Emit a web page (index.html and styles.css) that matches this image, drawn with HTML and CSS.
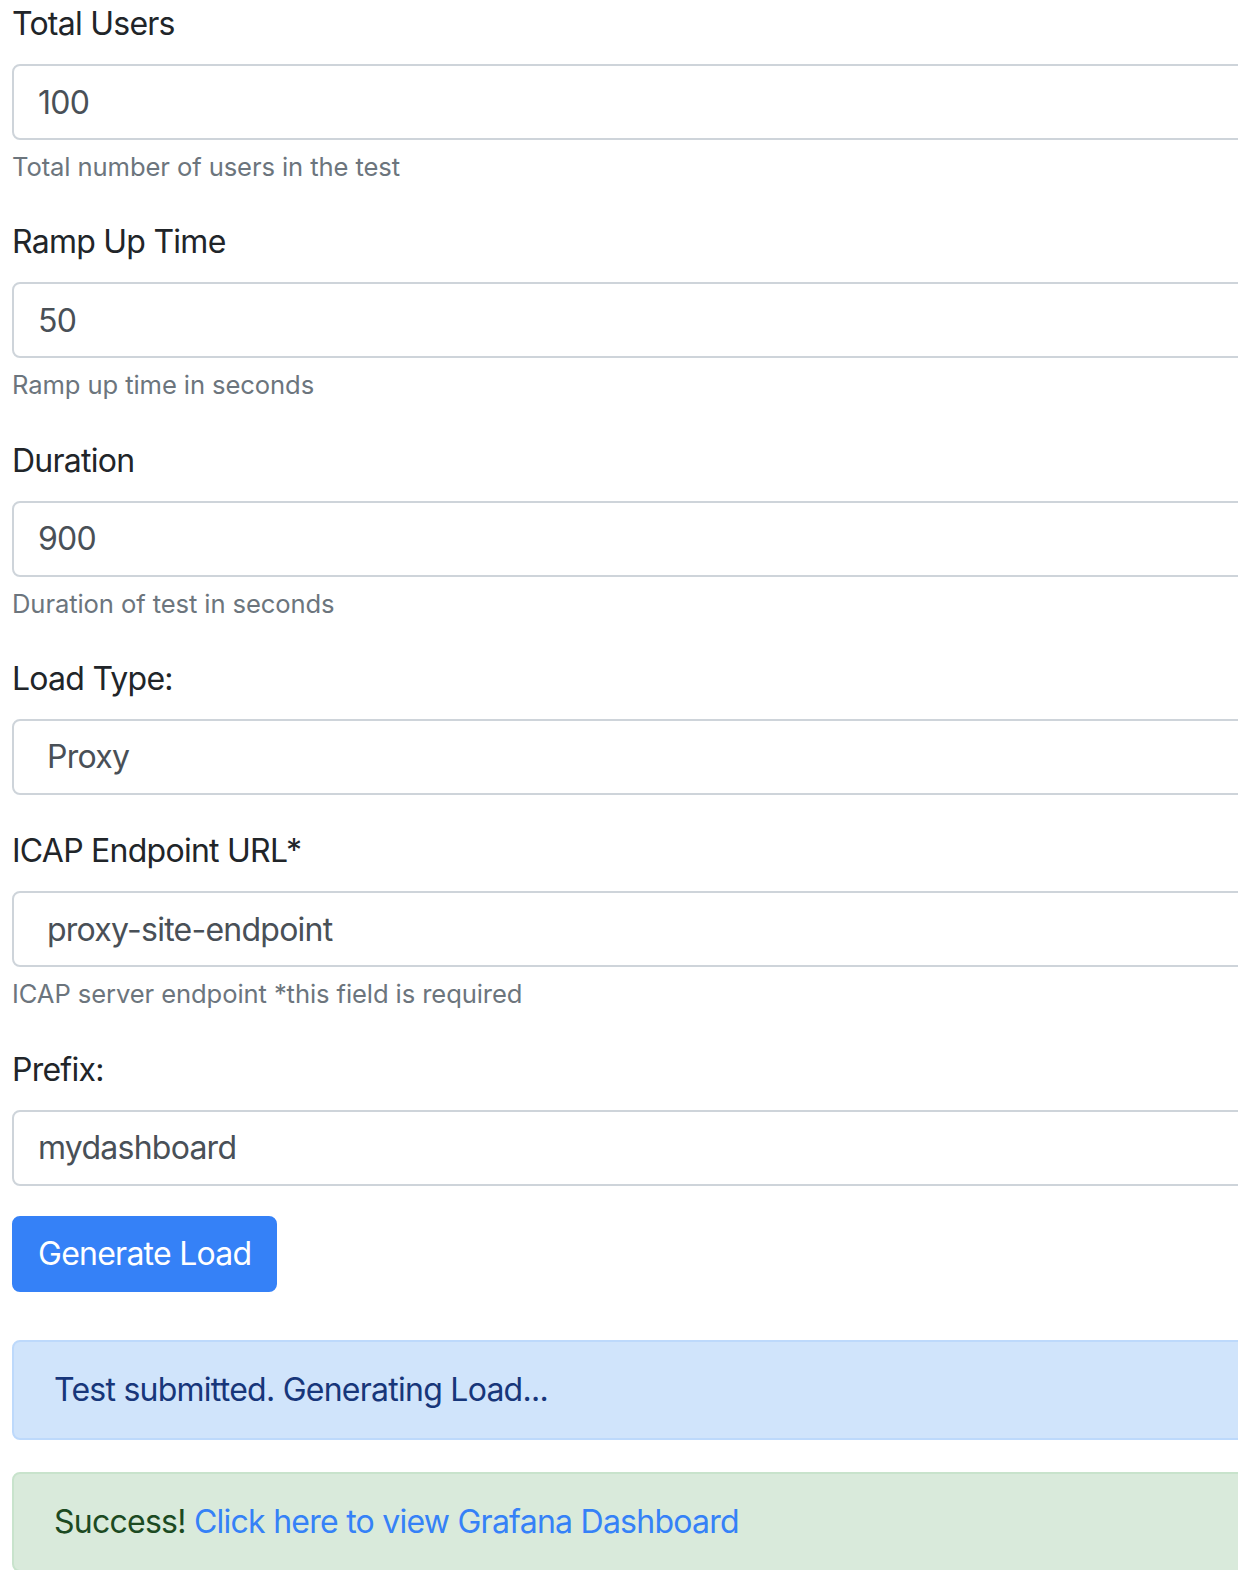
FILE: index.html
```html
<!DOCTYPE html>
<html>
<head>
<meta charset="utf-8">
<link rel="stylesheet" href="styles.css">
</head>
<body>
<div class="page">
  <form class="form">
    <div class="group">
      <label class="label">Total Users</label>
      <input class="control" value="100">
      <small class="help">Total number of users in the test</small>
    </div>
    <div class="group">
      <label class="label">Ramp Up Time</label>
      <input class="control" value="50">
      <small class="help">Ramp up time in seconds</small>
    </div>
    <div class="group">
      <label class="label">Duration</label>
      <input class="control" value="900">
      <small class="help">Duration of test in seconds</small>
    </div>
    <div class="group">
      <label class="label">Load Type:</label>
      <div class="control control-select">Proxy</div>
    </div>
    <div class="group">
      <label class="label">ICAP Endpoint URL*</label>
      <input class="control control-wide" value="proxy-site-endpoint">
      <small class="help">ICAP server endpoint *this field is required</small>
    </div>
    <div class="group">
      <label class="label">Prefix:</label>
      <input class="control" value="mydashboard">
    </div>
    <button type="button" class="btn">Generate Load</button>
  </form>
  <div class="alert alert-info">Test submitted. Generating Load...</div>
  <div class="alert alert-success">Success! <a class="link" href="#">Click here to view Grafana Dashboard</a></div>
</div>
</body>
</html>
```

FILE: styles.css
```css
html, body {
  margin: 0;
  padding: 0;
  overflow: hidden;
  background: #fff;
}
body {
  font-family: Inter, "Noto Sans", "Liberation Sans", sans-serif;
  font-size: 32px;
  line-height: 48px;
  color: #212529;
  letter-spacing: -0.75px;
}
.page {
  width: 1300px;
  padding-left: 12px;
}
.form {
  display: flex;
  flex-direction: column;
}
.group {
  display: flex;
  flex-direction: column;
  margin-bottom: 32px;
}
.label {
  display: block;
  margin-bottom: 16px;
  font-size: 32px;
  line-height: 48px;
  color: #212529;
}
.control {
  box-sizing: border-box;
  display: block;
  width: 100%;
  height: 76px;
  padding: 12px 24px;
  font-family: inherit;
  font-size: 32px;
  line-height: 48px;
  letter-spacing: -0.75px;
  color: #495057;
  background: #fff;
  border: 2px solid #ced4da;
  border-radius: 8px;
  outline: none;
  margin: 0;
}
.control-select,
.control-wide {
  padding-left: 33px;
}
.help {
  display: block;
  margin-top: 8px;
  font-size: 25.6px;
  line-height: 38.4px;
  letter-spacing: -0.1px;
  color: #6c757d;
}
.btn {
  align-self: flex-start;
  box-sizing: border-box;
  height: 76px;
  padding: 12px 24px;
  font-family: inherit;
  font-size: 32px;
  line-height: 48px;
  letter-spacing: -0.75px;
  color: #fff;
  background: #3581f7;
  border: 2px solid #3581f7;
  border-radius: 8px;
  margin: -2px 0 0 0;
}
.alert {
  box-sizing: border-box;
  padding: 24px 40px;
  border: 2px solid transparent;
  border-radius: 8px;
  font-size: 32px;
  line-height: 48px;
  margin-bottom: 32px;
}
.alert-info {
  margin-top: 48px;
  background: #d0e4fb;
  border-color: #bdd9fb;
  color: #17367a;
}
.alert-success {
  background: #d9eadb;
  border-color: #c8e3cc;
  color: #1c4a22;
}
.link {
  color: #3581f7;
  text-decoration: none;
}
```
